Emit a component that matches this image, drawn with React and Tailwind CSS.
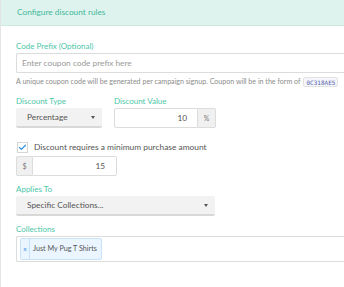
import { Check } from "lucide-react";

const font = { fontFamily: "Lato, 'Open Sans', sans-serif" };

const Label = ({ children }) => (
  <label className="block text-[8px] leading-[10px] text-[#4cc6a8] mb-[2px]">{children}</label>
);

const Caret = () => (
  <span className="w-0 h-0 border-l-[2.5px] border-r-[2.5px] border-t-[3px] border-l-transparent border-r-transparent border-t-[#555]" />
);

export default function App() {
  return (
    <div className="w-[344px] h-[287px] bg-white border-l border-[#e4e4e4] overflow-hidden text-[#555]" style={font}>
      {/* header */}
      <div className="h-[26px] bg-[#dff3ee] border-b border-[#cfe9e2] flex items-center pl-[16px]">
        <span className="text-[8.3px] text-[#3fb89a]">Configure discount rules</span>
      </div>

      <div className="pl-[15px] pt-[15px]">
        {/* code prefix */}
        <Label>Code Prefix (Optional)</Label>
        <div className="h-[20px] border border-[#dcdcdc] rounded-l-[2px] border-r-0 flex items-center pl-[5px] text-[8.3px] text-[#9a9a9a]">
          Enter coupon code prefix here
        </div>
        <div className="flex items-center h-[10px] mt-[4px] text-[7.1px] text-[#8c8c8c] whitespace-nowrap">
          A unique coupon code will be generated per campaign signup. Coupon will be in the form of
          <span className="ml-[3px] px-[2px] h-[10px] leading-[9px] border border-[#e2e2e2] bg-[#f4f6fb] text-[#5a5fa8] text-[6px] rounded-[2px]" style={{ fontFamily: "'DejaVu Sans Mono', monospace" }}>
            0C318AE5
          </span>
        </div>

        {/* discount type / value */}
        <div className="flex gap-[12px] mt-[9px]">
          <div className="w-[86px]">
            <Label>Discount Type</Label>
            <div className="h-[20px] bg-[#f2f2f2] border-b-2 border-[#d8d8d8] rounded-[2px] flex items-center justify-between pl-[11px] pr-[7px] text-[8.3px] text-[#555]">
              Percentage
              <Caret />
            </div>
          </div>
          <div>
            <Label>Discount Value</Label>
            <div className="flex h-[20px]">
              <div className="w-[84px] border border-[#dcdcdc] rounded-l-[2px] flex items-center justify-end pr-[10px] text-[8.3px] text-[#555]">10</div>
              <div className="w-[18px] bg-[#f0f0f0] border border-l-0 border-[#dcdcdc] rounded-r-[2px] flex items-center justify-center text-[7px] text-[#777]">%</div>
            </div>
          </div>
        </div>

        {/* checkbox */}
        <div className="flex items-center h-[11px] mt-[14px] ml-[1px]">
          <span className="w-[11px] h-[11px] border border-[#d6d6d6] bg-white flex items-center justify-center">
            <Check className="w-[9px] h-[9px] text-[#2a8fe0]" strokeWidth={3} />
          </span>
          <span className="ml-[6px] text-[8.4px] text-[#555]">Discount requires a minimum purchase amount</span>
        </div>
        <div className="flex h-[20px] mt-[3px]">
          <div className="w-[16px] bg-[#f0f0f0] border border-r-0 border-[#dcdcdc] rounded-l-[2px] flex items-center justify-center text-[7px] text-[#777]">$</div>
          <div className="w-[85px] border border-[#dcdcdc] rounded-r-[2px] flex items-center justify-end pr-[11px] text-[8.3px] text-[#555]">15</div>
        </div>

        {/* applies to */}
        <div className="mt-[8px]">
          <Label>Applies To</Label>
          <div className="w-[199px] h-[20px] bg-[#f2f2f2] border-b-2 border-[#d8d8d8] rounded-[2px] flex items-center justify-between pl-[11px] pr-[7px] text-[8.3px] text-[#555]">
            Specific Collections...
            <Caret />
          </div>
        </div>

        {/* collections */}
        <div className="mt-[8px]">
          <Label>Collections</Label>
          <div className="h-[26px] border border-[#dcdcdc] border-r-0 rounded-l-[2px] flex items-center pl-[3px]">
            <div className="h-[22px] flex items-stretch bg-[#ebf5ff] border border-[#c7e2fb] rounded-[2px] text-[7.2px] text-[#555]">
              <span className="w-[9px] flex items-center justify-center text-[#2d8ae5] border-r border-[#c7e2fb] text-[7px]">×</span>
              <span className="flex items-center pl-[3px] pr-[4px]">Just My Pug T Shirts</span>
            </div>
          </div>
        </div>
      </div>
    </div>
  );
}
